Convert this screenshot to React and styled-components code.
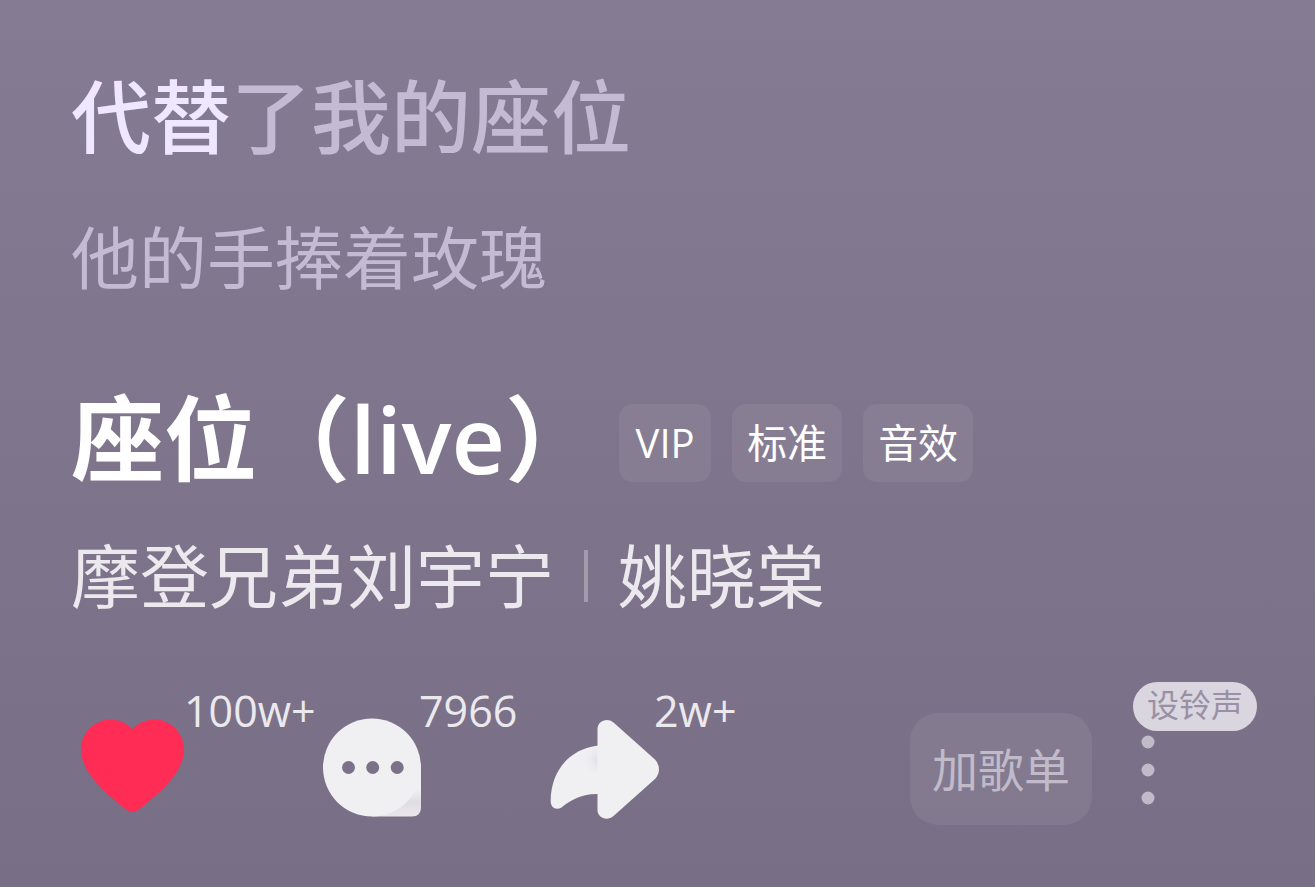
import styled, { createGlobalStyle } from "styled-components";

const lyrics = [
  { sung: "代替", rest: "了我的座位", current: true },
  { sung: "", rest: "他的手捧着玫瑰", current: false },
];

const tags = ["VIP", "标准", "音效"];

const artists = ["摩登兄弟刘宇宁", "姚晓棠"];

const HeartIcon = () => (
  <Icon viewBox="0 0 110 107" aria-hidden="true">
    <path
      fill="#ff2d55"
      d="M52.5 11C46 5 39 1.500 31 1.500C14 1.500 1 15 1 32C1 54 25 75 46 91.500Q52.500 96 59 91.500C80 75 104 54 104 32C104 15 91 1.500 74 1.500C66 1.500 59 5 52.500 11Z"
    />
  </Icon>
);

const CommentIcon = () => (
  <Icon viewBox="0 0 110 107" aria-hidden="true">
    <defs>
      <linearGradient id="fold" x1="0" y1="1" x2="0" y2="0">
        <stop offset="0" stopColor="#e9e7ec" />
        <stop offset="0.3" stopColor="#dfdde4" />
        <stop offset="0.55" stopColor="#f0f0f3" />
      </linearGradient>
    </defs>
    <path fill="url(#fold)" d="M57 98.500H97Q106 98.500 106 89.500V49.500Z" />
    <circle cx="57" cy="49.500" r="49" fill="#f0f0f3" />
    <g fill="#7b7188">
      <circle cx="33.500" cy="49.500" r="6.500" />
      <circle cx="57.700" cy="49.500" r="6.500" />
      <circle cx="82.200" cy="49.500" r="6.500" />
    </g>
  </Icon>
);

const ShareIcon = () => (
  <Icon viewBox="0 0 110 107" aria-hidden="true">
    <defs>
      <radialGradient
        id="tail"
        gradientUnits="userSpaceOnUse"
        cx="50"
        cy="42"
        r="15"
      >
        <stop offset="0" stopColor="#e2e0e6" />
        <stop offset="1" stopColor="#f0f0f3" />
      </radialGradient>
    </defs>
    <path
      fill="url(#tail)"
      d="M48 27.500C20 31 1 52 .7 83C.7 90 6 92.500 11.500 89.500C22 81 33 75.500 48 76Z"
    />
    <path
      fill="#f0f0f3"
      d="M47.500 11C47.500 3 57 -1 63.500 4.500L105 41.500Q109 46 109 51.500Q109 56.500 105 61L63.500 98C57 103.500 47.500 100 47.500 92Z"
    />
  </Icon>
);

const actions = [
  { name: "like", count: "100w+", icon: <HeartIcon /> },
  { name: "comment", count: "7966", icon: <CommentIcon /> },
  { name: "share", count: "2w+", icon: <ShareIcon /> },
];

const App = () => {
  return (
    <>
      <GlobalStyle />
      <Player>
        <Lyrics>
          {lyrics.map((line, idx) => (
            <LyricLine key={idx} $current={line.current}>
              <Sung>{line.sung}</Sung>
              {line.rest}
            </LyricLine>
          ))}
        </Lyrics>
        <TitleRow>
          <SongTitle>座位（live）</SongTitle>
          <TagList>
            {tags.map((tag) => (
              <Tag key={tag} type="button">
                {tag}
              </Tag>
            ))}
          </TagList>
        </TitleRow>
        <ArtistRow>
          {artists.map((artist) => (
            <Artist key={artist} href="#">
              {artist}
            </Artist>
          ))}
        </ArtistRow>
        <ActionBar>
          <ActionGroup>
            {actions.map((action) => (
              <Action key={action.name} type="button" aria-label={action.name}>
                {action.icon}
                <Count>{action.count}</Count>
              </Action>
            ))}
          </ActionGroup>
          <PlaylistBtn type="button">加歌单</PlaylistBtn>
          <MoreBtn type="button">
            <RingtoneBadge>设铃声</RingtoneBadge>
            <Dots viewBox="0 0 30 94" aria-hidden="true">
              <circle cx="15" cy="11" r="6.500" />
              <circle cx="15" cy="39" r="6.500" />
              <circle cx="15" cy="67" r="6.500" />
            </Dots>
          </MoreBtn>
        </ActionBar>
      </Player>
    </>
  );
};

export default App;

const GlobalStyle = createGlobalStyle`
  * {
    box-sizing: border-box;
    margin: 0;
    padding: 0;
  }
  body {
    background-color: #786e85;
    font-family: "Open Sans", "Noto Sans CJK SC", sans-serif;
  }
  button {
    border: none;
    background: none;
    font-family: inherit;
    cursor: pointer;
  }
`;

const Player = styled.main`
  min-height: 100vh;
  padding: 66px 58px 62px 71px;
  background: linear-gradient(#857b92, #786e85);
`;

const Lyrics = styled.div`
  display: flex;
  flex-direction: column;
  gap: 50px;
`;

const LyricLine = styled.p`
  font-size: ${({ $current }) => ($current ? "80px" : "68px")};
  font-weight: ${({ $current }) => ($current ? 500 : 400)};
  line-height: ${({ $current }) => ($current ? "100px" : "84px")};
  color: #c4bad3;
`;

const Sung = styled.span`
  color: #efe6ff;
`;

const TitleRow = styled.div`
  display: flex;
  align-items: flex-end;
  gap: 21px;
  margin-top: 94px;
`;

const SongTitle = styled.h1`
  font-size: 93px;
  font-weight: 600;
  line-height: 88px;
  color: #fff;
  white-space: nowrap;
`;

const TagList = styled.div`
  display: flex;
  gap: 21px;
`;

const Tag = styled.button`
  min-width: 92px;
  height: 78px;
  padding: 0 15px;
  border-radius: 14px;
  background-color: rgba(255, 255, 255, 0.07);
  font-size: 40px;
  line-height: 78px;
  color: #fff;
  white-space: nowrap;
`;

const ArtistRow = styled.div`
  display: flex;
  align-items: center;
  margin-top: 52px;
`;

const Artist = styled.a`
  display: flex;
  align-items: center;
  font-size: 69px;
  line-height: 84px;
  color: #ebe9ee;
  text-decoration: none;
  white-space: nowrap;

  & + &::before {
    content: "";
    width: 4px;
    height: 52px;
    margin: 0 30px;
    background-color: #a29bac;
  }
`;

const ActionBar = styled.div`
  display: flex;
  align-items: flex-end;
  margin-top: 64px;
`;

const ActionGroup = styled.div`
  display: flex;
  flex: 1;
  gap: 125px;
  padding-left: 9px;
`;

const Action = styled.button`
  position: relative;
  width: 110px;
  height: 107px;
`;

const Icon = styled.svg`
  display: block;
  width: 110px;
  height: 107px;
`;

const Count = styled.span`
  position: absolute;
  top: -29px;
  left: 104px;
  font-size: 43px;
  line-height: 44px;
  color: #ebe9ee;
`;

const PlaylistBtn = styled.button`
  height: 112px;
  padding: 0 22px;
  border-radius: 28px;
  background-color: rgba(255, 255, 255, 0.07);
  font-size: 46px;
  line-height: 112px;
  color: #c0bac9;
  white-space: nowrap;
`;

const MoreBtn = styled.button`
  display: flex;
  flex-direction: column;
  align-items: flex-start;
  margin-left: 41px;
`;

const RingtoneBadge = styled.span`
  height: 49px;
  padding: 0 14px;
  border-radius: 25px;
  background-color: #dad6df;
  font-size: 32px;
  line-height: 46px;
  color: #9990a5;
  white-space: nowrap;
`;

const Dots = styled.svg`
  width: 30px;
  height: 94px;
  fill: #c0bac9;
`;
